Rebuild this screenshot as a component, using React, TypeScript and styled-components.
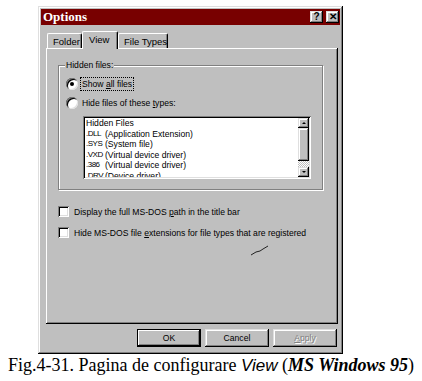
import React from 'react';
import styled, { createGlobalStyle, css } from 'styled-components';

const GlobalStyle = createGlobalStyle`
  html, body {
    margin: 0;
    padding: 0;
    background: #fff;
  }
  body {
    width: 422px;
    height: 381px;
    overflow: hidden;
  }
`;

const face = '#bfbfbf';

const raised = css`
  box-shadow: inset -1px -1px #000, inset 1px 1px #dfdfdf, inset -2px -2px #808080, inset 2px 2px #fff;
`;

const sunken = css`
  box-shadow: inset 1px 1px #808080, inset -1px -1px #fff, inset 2px 2px #000, inset -2px -2px #dfdfdf;
`;

const Page = styled.div`
  width: 422px;
  height: 381px;
  padding-top: 6px;
  box-sizing: border-box;
  display: flex;
  flex-direction: column;
`;

const Window = styled.div`
  margin-left: 38px;
  width: 305px;
  height: 348px;
  box-sizing: border-box;
  padding: 3px;
  background: ${face};
  ${raised};
  display: flex;
  flex-direction: column;
  font-family: "Liberation Sans", Arial, sans-serif;
  font-size: 8.6px;
  color: #000;
`;

const TitleBar = styled.div`
  height: 16px;
  background: #780000;
  display: flex;
  align-items: center;
  padding: 0 1px 0 2px;
`;

const Title = styled.span`
  font-family: "Liberation Serif", "Times New Roman", serif;
  font-weight: bold;
  font-size: 13px;
  color: #fff;
  flex: 1;
`;

const CapButton = styled.div`
  width: 13px;
  height: 12px;
  margin-left: 3px;
  background: ${face};
  ${raised};
  display: flex;
  align-items: center;
  justify-content: center;
  font-weight: bold;
  font-size: 10px;
  line-height: 1;
`;

const TabRow = styled.div`
  display: flex;
  align-items: flex-end;
  height: 17px;
  margin-top: 6px;
  padding-left: 6px;
  position: relative;
  z-index: 1;
`;

const Tab = styled.div<{ $active?: boolean; $width: number }>`
  box-sizing: border-box;
  width: ${(p) => p.$width}px;
  height: ${(p) => (p.$active ? 18 : 15)}px;
  margin-bottom: ${(p) => (p.$active ? -1 : 0)}px;
  background: ${face};
  border-top: 1px solid #fff;
  border-left: 1px solid #fff;
  border-right: 1px solid #000;
  border-radius: 2px 2px 0 0;
  box-shadow: inset -1px 0 #808080;
  padding: ${(p) => (p.$active ? '2px 0 0 6px' : '2px 0 0 5px')};
  font-size: 9.5px;
  white-space: nowrap;
`;

const Panel = styled.div`
  position: relative;
  margin: 0 2px 0 5px;
  height: 276px;
  box-sizing: border-box;
  padding: 12px 15px 0 12px;
  box-shadow: inset -1px -1px #000, inset 1px 1px #fff, inset -2px -2px #808080;
`;

const Group = styled.fieldset`
  margin: 0;
  width: 265px;
  height: 130px;
  box-sizing: border-box;
  padding: 0 0 0 6px;
  border: 1px solid #808080;
  box-shadow: inset 1px 1px #fff, 1px 1px #fff;
  display: flex;
  flex-direction: column;
`;

const Legend = styled.legend`
  padding: 0 1px;
  line-height: 11px;
  background: ${face};
`;

const OptionRow = styled.div<{ $top: number }>`
  display: flex;
  align-items: center;
  height: 13px;
  margin-top: ${(p) => p.$top}px;
`;

const Radio = styled.span<{ $checked?: boolean }>`
  width: 12px;
  height: 12px;
  margin: 0 3px 0 1px;
  border-radius: 50%;
  background: #fff;
  box-shadow: inset 1px 1px #808080, inset -1px -1px #dfdfdf, inset 2px 2px #000;
  display: flex;
  align-items: center;
  justify-content: center;

  &::after {
    content: '';
    display: ${(p) => (p.$checked ? 'block' : 'none')};
    width: 4px;
    height: 4px;
    border-radius: 50%;
    background: #000;
  }
`;

const Check = styled.span`
  width: 11px;
  height: 11px;
  margin-right: 4px;
  background: #fff;
  ${sunken};
`;

const Label = styled.span<{ $focus?: boolean }>`
  padding: 1px 1px;
  outline: ${(p) => (p.$focus ? '1px dotted #000' : 'none')};
  white-space: nowrap;
`;

const ListBox = styled.div`
  margin: 7px 0 0 18px;
  width: 228px;
  height: 63px;
  box-sizing: border-box;
  padding: 2px;
  background: #fff;
  ${sunken};
  display: flex;
`;

const ListItems = styled.div`
  flex: 1;
  overflow: hidden;
  padding-left: 1px;
  line-height: 10.6px;
`;

const ListRow = styled.div`
  display: grid;
  grid-template-columns: 19px 1fr;
  white-space: nowrap;
`;

const Ext = styled.span`
  font-size: 8px;
  letter-spacing: -0.5px;
`;

const ScrollBar = styled.div`
  width: 11px;
  display: flex;
  flex-direction: column;
`;

const ScrollButton = styled.div`
  height: 10px;
  background: ${face};
  ${raised};
  display: flex;
  align-items: center;
  justify-content: center;
`;

const Thumb = styled.div`
  height: 33px;
  background: ${face};
  ${raised};
`;

const Track = styled.div`
  flex: 1;
  background-color: #fff;
  background-image: linear-gradient(45deg, ${face} 25%, transparent 25%, transparent 75%, ${face} 75%),
    linear-gradient(45deg, ${face} 25%, transparent 25%, transparent 75%, ${face} 75%);
  background-size: 2px 2px;
  background-position: 0 0, 1px 1px;
`;

const Arrow = styled.span<{ $down?: boolean }>`
  width: 0;
  height: 0;
  border-left: 2px solid transparent;
  border-right: 2px solid transparent;
  ${(p) => (p.$down ? 'border-top: 2px solid #000;' : 'border-bottom: 2px solid #000;')}
`;

const Scribble = styled.svg`
  position: absolute;
  left: 204px;
  top: 196px;
`;

const ButtonRow = styled.div`
  display: flex;
  justify-content: flex-end;
  gap: 3px;
  margin-top: 5px;
  padding-right: 3px;
`;

const Button = styled.div<{ $default?: boolean; $disabled?: boolean }>`
  width: 64px;
  height: 18px;
  box-sizing: border-box;
  background: ${face};
  display: flex;
  align-items: center;
  justify-content: center;
  color: ${(p) => (p.$disabled ? '#808080' : '#000')};
  text-shadow: ${(p) => (p.$disabled ? '1px 1px #fff' : 'none')};
  ${(p) =>
    p.$default
      ? css`
          border: 1px solid #000;
          box-shadow: inset -1px -1px #000, inset 1px 1px #fff, inset -2px -2px #808080;
        `
      : raised};
  & + & {
    margin-left: ${(p) => (p.$disabled ? 1 : 0)}px;
  }
`;

const Caption = styled.div`
  margin-top: 1px;
  text-align: center;
  font-family: "Liberation Serif", "Times New Roman", serif;
  font-size: 18px;
  line-height: 20px;
  color: #000;
  white-space: nowrap;
`;

const SansItalic = styled.span`
  font-family: "Liberation Sans", Arial, sans-serif;
  font-style: italic;
  font-size: 17px;
`;

const BoldItalic = styled.span`
  font-weight: bold;
  font-style: italic;
`;

const files = [
  ['.DLL', '(Application Extension)'],
  ['.SYS', '(System file)'],
  ['.VXD', '(Virtual device driver)'],
  ['.386', '(Virtual device driver)'],
  ['.DRV', '(Device driver)'],
];

const App: React.FC = () => {
  return (
    <Page>
      <GlobalStyle />
      <Window>
        <TitleBar>
          <Title>Options</Title>
          <CapButton>?</CapButton>
          <CapButton>✕</CapButton>
        </TitleBar>
        <TabRow>
          <Tab $width={35}>Folder</Tab>
          <Tab $width={36} $active>View</Tab>
          <Tab $width={50}>File Types</Tab>
        </TabRow>
        <Panel>
          <Group>
            <Legend>Hidden files:</Legend>
            <OptionRow $top={6}>
              <Radio $checked />
              <Label $focus>
                Show <u>a</u>ll files
              </Label>
            </OptionRow>
            <OptionRow $top={6}>
              <Radio />
              <Label>
                Hide files of these <u>t</u>ypes:
              </Label>
            </OptionRow>
            <ListBox>
              <ListItems>
                <div>Hidden Files</div>
                {files.map(([ext, desc]) => (
                  <ListRow key={ext}>
                    <Ext>{ext}</Ext>
                    <span>{desc}</span>
                  </ListRow>
                ))}
              </ListItems>
              <ScrollBar>
                <ScrollButton>
                  <Arrow />
                </ScrollButton>
                <Thumb />
                <Track />
                <ScrollButton>
                  <Arrow $down />
                </ScrollButton>
              </ScrollBar>
            </ListBox>
          </Group>
          <OptionRow $top={15}>
            <Check />
            <Label>
              Display the full MS-DOS <u>p</u>ath in the title bar
            </Label>
          </OptionRow>
          <OptionRow $top={8}>
            <Check />
            <Label>
              Hide MS-DOS file <u>e</u>xtensions for file types that are registered
            </Label>
          </OptionRow>
          <Scribble width="20" height="12" viewBox="0 0 20 12">
            <polyline points="1,11 6,8 10,7 13,5 18,2" fill="none" stroke="#222" strokeWidth="1" />
          </Scribble>
        </Panel>
        <ButtonRow>
          <Button $default>OK</Button>
          <Button>Cancel</Button>
          <Button $disabled>
            <u>A</u>pply
          </Button>
        </ButtonRow>
      </Window>
      <Caption>
        Fig.4-31. Pagina de configurare <SansItalic>View</SansItalic> (<BoldItalic>MS Windows 95</BoldItalic>)
      </Caption>
    </Page>
  );
};

export default App;
